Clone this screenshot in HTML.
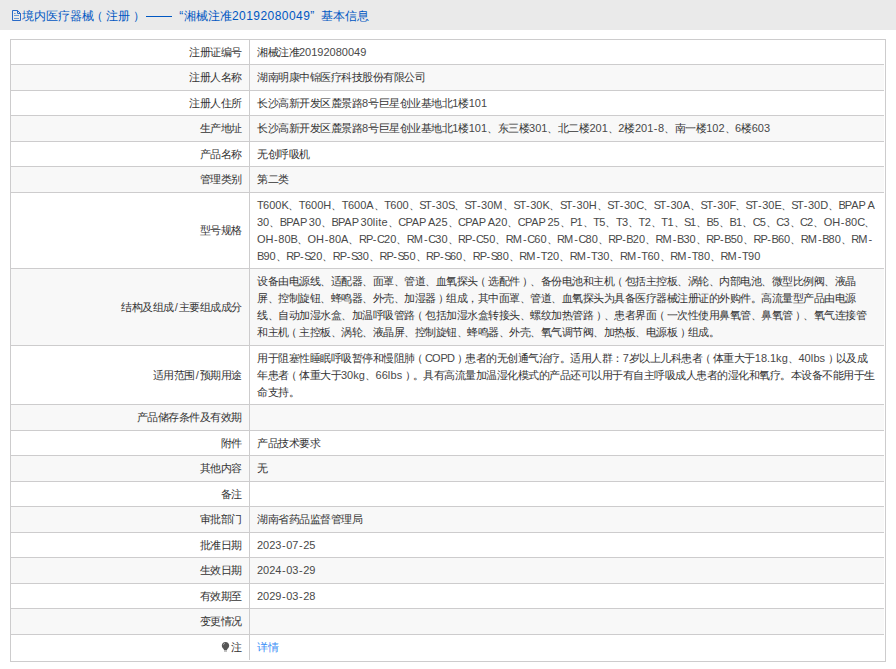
<!DOCTYPE html>
<html><head><meta charset="utf-8">
<style>
html,body{margin:0;padding:0;background:#fff;width:896px;height:669px;overflow:hidden;}
body{font-family:"Liberation Sans",sans-serif;color:#333;position:relative;}
.a{position:absolute;}
.hl{position:absolute;height:1px;background:#cdcccd;}
.vln{position:absolute;width:1px;background:#cdcccd;}
.g{position:absolute;background:#f8f8f8;}
.tx{position:absolute;font-size:10.5px;line-height:17.0px;white-space:nowrap;}
.lb{text-align:right;}
.hh{font-size:12px;line-height:16px;color:#0057c2}
.hc{font-size:12px;letter-spacing:0}
.hd{font-size:12px;letter-spacing:0.45px}
.L{font-size:11.0px;color:#484848}
.pl{position:relative;left:-2.5px}
.pr{position:relative;left:2.5px}
.c{font-size:11px;letter-spacing:-0.5px}
.k20{letter-spacing:-0.53px}
.k2d{margin-left:0.54px;letter-spacing:0.54px}
.k2e{letter-spacing:-0.14px}
.k2f{margin-left:0.75px;letter-spacing:0.75px}
.k41{letter-spacing:0.06px}
.k42{letter-spacing:-0.89px}
.k43{letter-spacing:-0.92px}
.k44{letter-spacing:-0.19px}
.k45{letter-spacing:-1.01px}
.k46{letter-spacing:-1.28px}
.k48{letter-spacing:0.06px}
.k4b{letter-spacing:-0.46px}
.k4d{letter-spacing:0.54px}
.k50{letter-spacing:-1.03px}
.k52{letter-spacing:-0.95px}
.k53{letter-spacing:-1.52px}
.k54{letter-spacing:-0.62px}
.k62{letter-spacing:0.07px}
.k65{letter-spacing:0.13px}
.k67{letter-spacing:0.07px}
.k69{letter-spacing:0.30px}
.k6b{letter-spacing:0.10px}
.k6c{letter-spacing:0.30px}
.k73{letter-spacing:0.10px}
.k74{letter-spacing:0.27px}
</style></head><body>

<div class="a" style="left:0;top:0;width:896px;height:29.5px;background:#eaeaea"></div>
<svg class="a" style="left:8px;top:6px" width="18" height="18" viewBox="8 6 18 18"><path d="M12.5 10.5h5l3 3v7h-8z M17.5 10.5v3h3" fill="none" stroke="#1f63c6" stroke-width="0.95"/><path d="M14 13.5h1.6 M14 15.5h5 M14 18.5h5" fill="none" stroke="#0057c2" stroke-width="0.9" opacity="0.6"/></svg>
<div class="tx hh" style="left:22.30px;top:8.00px;"><span class="hc">境内医疗器械<span style="position:relative;left:-3.5px">（</span>注册<span style="position:relative;left:2.5px">）</span></span></div>
<div class="a" style="left:146px;top:16px;width:26px;height:1px;background:#0057c2"></div>
<div class="tx hh" style="left:179.20px;top:8.00px;">“</div>
<div class="tx hh" style="left:183.90px;top:8.00px;"><span class="hc">湘械注准</span><span class="hd">20192080049</span></div>
<div class="tx hh" style="left:310.30px;top:8.00px;">”</div>
<div class="tx hh" style="left:321.00px;top:8.00px;"><span class="hc">基本信息</span></div>
<div class="g" style="left:11px;top:65px;width:873px;height:25px"></div>
<div class="g" style="left:11px;top:116px;width:873px;height:25px"></div>
<div class="g" style="left:11px;top:167px;width:873px;height:25px"></div>
<div class="g" style="left:11px;top:269px;width:873px;height:76px"></div>
<div class="g" style="left:11px;top:405px;width:873px;height:25px"></div>
<div class="g" style="left:11px;top:456px;width:873px;height:25px"></div>
<div class="g" style="left:11px;top:507px;width:873px;height:25px"></div>
<div class="g" style="left:11px;top:558px;width:873px;height:25px"></div>
<div class="g" style="left:11px;top:609px;width:873px;height:25px"></div>
<div class="a" style="left:10px;top:39px;width:874px;height:621px;border:1px solid #cdcccd"></div>
<div class="hl" style="left:10px;top:64px;width:874px"></div>
<div class="hl" style="left:10px;top:90px;width:874px"></div>
<div class="hl" style="left:10px;top:115px;width:874px"></div>
<div class="hl" style="left:10px;top:141px;width:874px"></div>
<div class="hl" style="left:10px;top:166px;width:874px"></div>
<div class="hl" style="left:10px;top:192px;width:874px"></div>
<div class="hl" style="left:10px;top:268px;width:874px"></div>
<div class="hl" style="left:10px;top:345px;width:874px"></div>
<div class="hl" style="left:10px;top:404px;width:874px"></div>
<div class="hl" style="left:10px;top:430px;width:874px"></div>
<div class="hl" style="left:10px;top:455px;width:874px"></div>
<div class="hl" style="left:10px;top:481px;width:874px"></div>
<div class="hl" style="left:10px;top:506px;width:874px"></div>
<div class="hl" style="left:10px;top:532px;width:874px"></div>
<div class="hl" style="left:10px;top:557px;width:874px"></div>
<div class="hl" style="left:10px;top:583px;width:874px"></div>
<div class="hl" style="left:10px;top:608px;width:874px"></div>
<div class="hl" style="left:10px;top:634px;width:874px"></div>
<div class="vln" style="left:249px;top:39px;height:621px"></div>
<div class="tx lb" style="right:654.50px;top:43.50px"><span class="c">注册证编号</span></div>
<div class="tx" style="left:257px;top:43.50px;"><span class="c">湘械注准</span><span class="L">20192080049</span></div>
<div class="tx lb" style="right:654.50px;top:69.00px"><span class="c">注册人名称</span></div>
<div class="tx" style="left:257px;top:69.00px;"><span class="c">湖南明康中锦医疗科技股份有限公司</span></div>
<div class="tx lb" style="right:654.50px;top:94.50px"><span class="c">注册人住所</span></div>
<div class="tx" style="left:257px;top:94.50px;"><span class="c">长沙高新开发区麓景路</span><span class="L">8</span><span class="c">号巨星创业基地北</span><span class="L">1</span><span class="c">楼</span><span class="L">101</span></div>
<div class="tx lb" style="right:654.50px;top:120.00px"><span class="c">生产地址</span></div>
<div class="tx" style="left:257px;top:120.00px;"><span class="c">长沙高新开发区麓景路</span><span class="L">8</span><span class="c">号巨星创业基地北</span><span class="L">1</span><span class="c">楼</span><span class="L">101</span><span class="c">、东三楼</span><span class="L">301</span><span class="c">、北二楼</span><span class="L">201</span><span class="c">、</span><span class="L">2</span><span class="c">楼</span><span class="L">201<span class="k2d">-</span>8</span><span class="c">、南一楼</span><span class="L">102</span><span class="c">、</span><span class="L">6</span><span class="c">楼</span><span class="L">603</span></div>
<div class="tx lb" style="right:654.50px;top:145.50px"><span class="c">产品名称</span></div>
<div class="tx" style="left:257px;top:145.50px;"><span class="c">无创呼吸机</span></div>
<div class="tx lb" style="right:654.50px;top:171.00px"><span class="c">管理类别</span></div>
<div class="tx" style="left:257px;top:171.00px;"><span class="c">第二类</span></div>
<div class="tx lb" style="right:654.50px;top:222.00px"><span class="c">型号规格</span></div>
<div class="tx" style="left:257px;top:196.50px;"><span class="L"><span class="k54">T</span>600<span class="k4b">K</span></span><span class="c">、</span><span class="L"><span class="k54">T</span>600<span class="k48">H</span></span><span class="c">、</span><span class="L"><span class="k54">T</span>600<span class="k41">A</span></span><span class="c">、</span><span class="L"><span class="k54">T</span>600</span><span class="c">、</span><span class="L"><span class="k53">S</span><span class="k54">T</span><span class="k2d">-</span>30<span class="k53">S</span></span><span class="c">、</span><span class="L"><span class="k53">S</span><span class="k54">T</span><span class="k2d">-</span>30<span class="k4d">M</span></span><span class="c">、</span><span class="L"><span class="k53">S</span><span class="k54">T</span><span class="k2d">-</span>30<span class="k4b">K</span></span><span class="c">、</span><span class="L"><span class="k53">S</span><span class="k54">T</span><span class="k2d">-</span>30<span class="k48">H</span></span><span class="c">、</span><span class="L"><span class="k53">S</span><span class="k54">T</span><span class="k2d">-</span>30<span class="k43">C</span></span><span class="c">、</span><span class="L"><span class="k53">S</span><span class="k54">T</span><span class="k2d">-</span>30<span class="k41">A</span></span><span class="c">、</span><span class="L"><span class="k53">S</span><span class="k54">T</span><span class="k2d">-</span>30<span class="k46">F</span></span><span class="c">、</span><span class="L"><span class="k53">S</span><span class="k54">T</span><span class="k2d">-</span>30<span class="k45">E</span></span><span class="c">、</span><span class="L"><span class="k53">S</span><span class="k54">T</span><span class="k2d">-</span>30<span class="k44">D</span></span><span class="c">、</span><span class="L"><span class="k42">B</span><span class="k50">P</span><span class="k41">A</span><span class="k50">P</span><span class="k20"> </span><span class="k41">A</span></span><br><span class="L">30</span><span class="c">、</span><span class="L"><span class="k42">B</span><span class="k50">P</span><span class="k41">A</span><span class="k50">P</span><span class="k20"> </span>30</span><span class="c">、</span><span class="L"><span class="k42">B</span><span class="k50">P</span><span class="k41">A</span><span class="k50">P</span><span class="k20"> </span>30<span class="k6c">l</span><span class="k69">i</span><span class="k74">t</span><span class="k65">e</span></span><span class="c">、</span><span class="L"><span class="k43">C</span><span class="k50">P</span><span class="k41">A</span><span class="k50">P</span><span class="k20"> </span><span class="k41">A</span>25</span><span class="c">、</span><span class="L"><span class="k43">C</span><span class="k50">P</span><span class="k41">A</span><span class="k50">P</span><span class="k20"> </span><span class="k41">A</span>20</span><span class="c">、</span><span class="L"><span class="k43">C</span><span class="k50">P</span><span class="k41">A</span><span class="k50">P</span><span class="k20"> </span>25</span><span class="c">、</span><span class="L"><span class="k50">P</span>1</span><span class="c">、</span><span class="L"><span class="k54">T</span>5</span><span class="c">、</span><span class="L"><span class="k54">T</span>3</span><span class="c">、</span><span class="L"><span class="k54">T</span>2</span><span class="c">、</span><span class="L"><span class="k54">T</span>1</span><span class="c">、</span><span class="L"><span class="k53">S</span>1</span><span class="c">、</span><span class="L"><span class="k42">B</span>5</span><span class="c">、</span><span class="L"><span class="k42">B</span>1</span><span class="c">、</span><span class="L"><span class="k43">C</span>5</span><span class="c">、</span><span class="L"><span class="k43">C</span>3</span><span class="c">、</span><span class="L"><span class="k43">C</span>2</span><span class="c">、</span><span class="L">O<span class="k48">H</span><span class="k2d">-</span>80<span class="k43">C</span></span><span class="c">、</span><br><span class="L">O<span class="k48">H</span><span class="k2d">-</span>80<span class="k42">B</span></span><span class="c">、</span><span class="L">O<span class="k48">H</span><span class="k2d">-</span>80<span class="k41">A</span></span><span class="c">、</span><span class="L"><span class="k52">R</span><span class="k50">P</span><span class="k2d">-</span><span class="k43">C</span>20</span><span class="c">、</span><span class="L"><span class="k52">R</span><span class="k4d">M</span><span class="k2d">-</span><span class="k43">C</span>30</span><span class="c">、</span><span class="L"><span class="k52">R</span><span class="k50">P</span><span class="k2d">-</span><span class="k43">C</span>50</span><span class="c">、</span><span class="L"><span class="k52">R</span><span class="k4d">M</span><span class="k2d">-</span><span class="k43">C</span>60</span><span class="c">、</span><span class="L"><span class="k52">R</span><span class="k4d">M</span><span class="k2d">-</span><span class="k43">C</span>80</span><span class="c">、</span><span class="L"><span class="k52">R</span><span class="k50">P</span><span class="k2d">-</span><span class="k42">B</span>20</span><span class="c">、</span><span class="L"><span class="k52">R</span><span class="k4d">M</span><span class="k2d">-</span><span class="k42">B</span>30</span><span class="c">、</span><span class="L"><span class="k52">R</span><span class="k50">P</span><span class="k2d">-</span><span class="k42">B</span>50</span><span class="c">、</span><span class="L"><span class="k52">R</span><span class="k50">P</span><span class="k2d">-</span><span class="k42">B</span>60</span><span class="c">、</span><span class="L"><span class="k52">R</span><span class="k4d">M</span><span class="k2d">-</span><span class="k42">B</span>80</span><span class="c">、</span><span class="L"><span class="k52">R</span><span class="k4d">M</span><span class="k2d">-</span></span><br><span class="L"><span class="k42">B</span>90</span><span class="c">、</span><span class="L"><span class="k52">R</span><span class="k50">P</span><span class="k2d">-</span><span class="k53">S</span>20</span><span class="c">、</span><span class="L"><span class="k52">R</span><span class="k50">P</span><span class="k2d">-</span><span class="k53">S</span>30</span><span class="c">、</span><span class="L"><span class="k52">R</span><span class="k50">P</span><span class="k2d">-</span><span class="k53">S</span>50</span><span class="c">、</span><span class="L"><span class="k52">R</span><span class="k50">P</span><span class="k2d">-</span><span class="k53">S</span>60</span><span class="c">、</span><span class="L"><span class="k52">R</span><span class="k50">P</span><span class="k2d">-</span><span class="k53">S</span>80</span><span class="c">、</span><span class="L"><span class="k52">R</span><span class="k4d">M</span><span class="k2d">-</span><span class="k54">T</span>20</span><span class="c">、</span><span class="L"><span class="k52">R</span><span class="k4d">M</span><span class="k2d">-</span><span class="k54">T</span>30</span><span class="c">、</span><span class="L"><span class="k52">R</span><span class="k4d">M</span><span class="k2d">-</span><span class="k54">T</span>60</span><span class="c">、</span><span class="L"><span class="k52">R</span><span class="k4d">M</span><span class="k2d">-</span><span class="k54">T</span>80</span><span class="c">、</span><span class="L"><span class="k52">R</span><span class="k4d">M</span><span class="k2d">-</span><span class="k54">T</span>90</span></div>
<div class="tx lb" style="right:654.50px;top:298.50px"><span class="c">结构及组成</span><span class="L"><span class="k2f">/</span></span><span class="c">主要组成成分</span></div>
<div class="tx" style="left:257px;top:273.00px;"><span class="c">设备由电源线、适配器、面罩、管道、血氧探头<span class="pl">（</span>选配件<span class="pr">）</span>、备份电池和主机<span class="pl">（</span>包括主控板、涡轮、内部电池、微型比例阀、液晶</span><br><span class="c">屏、控制旋钮、蜂鸣器、外壳、加湿器<span class="pr">）</span>组成，其中面罩、管道、血氧探头为具备医疗器械注册证的外购件。高流量型产品由电源</span><br><span class="c">线、自动加湿水盒、加温呼吸管路<span class="pl">（</span>包括加湿水盒转接头、螺纹加热管路<span class="pr">）</span>、患者界面<span class="pl">（</span>一次性使用鼻氧管、鼻氧管<span class="pr">）</span>、氧气连接管</span><br><span class="c">和主机<span class="pl">（</span>主控板、涡轮、液晶屏、控制旋钮、蜂鸣器、外壳、氧气调节阀、加热板、电源板<span class="pr">）</span>组成。</span></div>
<div class="tx lb" style="right:654.50px;top:366.50px"><span class="c">适用范围</span><span class="L"><span class="k2f">/</span></span><span class="c">预期用途</span></div>
<div class="tx" style="left:257px;top:349.50px;"><span class="c">用于阻塞性睡眠呼吸暂停和慢阻肺<span class="pl">（</span></span><span class="L"><span class="k43">C</span>O<span class="k50">P</span><span class="k44">D</span></span><span class="c"><span class="pr">）</span>患者的无创通气治疗。适用人群：</span><span class="L">7</span><span class="c">岁以上儿科患者<span class="pl">（</span>体重大于</span><span class="L">18<span class="k2e">.</span>1<span class="k6b">k</span><span class="k67">g</span></span><span class="c">、</span><span class="L">40<span class="k6c">l</span><span class="k62">b</span><span class="k73">s</span></span><span class="c"><span class="pr">）</span>以及成</span><br><span class="c">年患者<span class="pl">（</span>体重大于</span><span class="L">30<span class="k6b">k</span><span class="k67">g</span></span><span class="c">、</span><span class="L">66<span class="k6c">l</span><span class="k62">b</span><span class="k73">s</span></span><span class="c"><span class="pr">）</span>。具有高流量加温湿化模式的产品还可以用于有自主呼吸成人患者的湿化和氧疗。本设备不能用于生</span><br><span class="c">命支持。</span></div>
<div class="tx lb" style="right:654.50px;top:409.00px"><span class="c">产品储存条件及有效期</span></div>
<div class="tx lb" style="right:654.50px;top:434.50px"><span class="c">附件</span></div>
<div class="tx" style="left:257px;top:434.50px;"><span class="c">产品技术要求</span></div>
<div class="tx lb" style="right:654.50px;top:460.00px"><span class="c">其他内容</span></div>
<div class="tx" style="left:257px;top:460.00px;"><span class="c">无</span></div>
<div class="tx lb" style="right:654.50px;top:485.50px"><span class="c">备注</span></div>
<div class="tx lb" style="right:654.50px;top:511.00px"><span class="c">审批部门</span></div>
<div class="tx" style="left:257px;top:511.00px;"><span class="c">湖南省药品监督管理局</span></div>
<div class="tx lb" style="right:654.50px;top:536.50px"><span class="c">批准日期</span></div>
<div class="tx" style="left:257px;top:536.50px;"><span class="L">2023<span class="k2d">-</span>07<span class="k2d">-</span>25</span></div>
<div class="tx lb" style="right:654.50px;top:562.00px"><span class="c">生效日期</span></div>
<div class="tx" style="left:257px;top:562.00px;"><span class="L">2024<span class="k2d">-</span>03<span class="k2d">-</span>29</span></div>
<div class="tx lb" style="right:654.50px;top:587.50px"><span class="c">有效期至</span></div>
<div class="tx" style="left:257px;top:587.50px;"><span class="L">2029<span class="k2d">-</span>03<span class="k2d">-</span>28</span></div>
<div class="tx lb" style="right:654.50px;top:613.00px"><span class="c">变更情况</span></div>
<svg class="a" style="left:216px;top:636px" width="16" height="20" viewBox="216 636 16 20"><path d="M225.5 641.9c-2.1 0-3.7 1.6-3.7 3.6c0 1.5 0.9 2.5 1.6 3.3c0.4 0.5 0.6 0.9 0.6 1.2h3c0-0.3 0.2-0.7 0.6-1.2c0.7-0.8 1.6-1.8 1.6-3.3c0-2-1.6-3.6-3.7-3.6z" fill="#555"/><rect x="224" y="650.2" width="3" height="1.5" fill="#aaa"/><path d="M223.3 645.2c0.1-1 0.8-1.8 1.7-2" stroke="#bbb" stroke-width="0.7" fill="none"/></svg>
<div class="tx lb" style="right:654.50px;top:638.75px"><span class="c">注</span></div>
<div class="tx" style="left:257px;top:638.75px;color:#3a8ef6;"><span class="c">详情</span></div>
</body></html>
